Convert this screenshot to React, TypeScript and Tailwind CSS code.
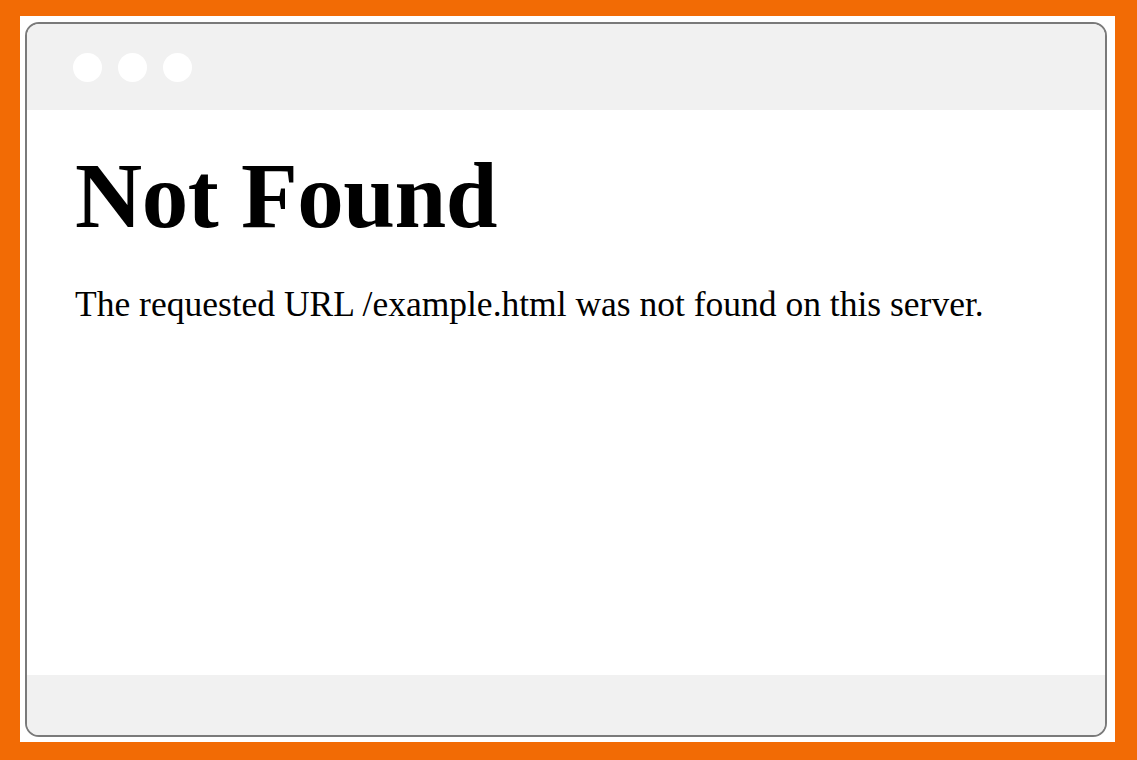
const Dot = () => <span className="block h-[29px] w-[29px] rounded-full bg-white" />;

export default function App() {
  return (
    <div className="h-[760px] w-[1137px] bg-[#f26b05] pl-[20px] pr-[22px] pt-[16px] pb-[18px]">
      <div className="flex h-full w-full flex-col bg-white pl-[5px] pr-[8px] pt-[6px] pb-[5px]">
        {/* Browser window */}
        <div className="flex flex-1 flex-col overflow-hidden rounded-[14px] border-2 border-[#7a7a7a]">
          <div className="flex h-[86px] items-center gap-[16px] bg-[#f1f1f1] pl-[46px]">
            <Dot />
            <Dot />
            <Dot />
          </div>
          <div className="flex-1 bg-white pl-[48px] pt-[39px] font-['Liberation_Serif',serif] text-black">
            <h1 className="text-[93px] font-bold leading-none tracking-[-0.5px]">Not Found</h1>
            <p className="mt-[45px] text-[35.5px] leading-none">
              The requested URL /example.html was not found on this server.
            </p>
          </div>
          <div className="h-[60px] bg-[#f1f1f1]" />
        </div>
      </div>
    </div>
  );
}
